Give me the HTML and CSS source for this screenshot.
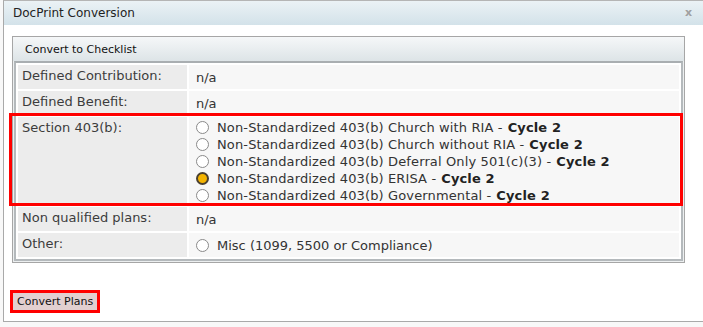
FILE: index.html
```html
<!DOCTYPE html>
<html lang="en">
<head>
    <meta charset="UTF-8">
    <title>DocPrint Conversion</title>
    <link rel="stylesheet" href="styles.css">
</head>
<body>
    <div class="dialog">
        <div class="dialog-title">
            <span>DocPrint Conversion</span>
            <span class="close">x</span>
        </div>
        <div class="dialog-body">
            <div class="panel">
                <div class="panel-head">Convert to Checklist</div>
                <div class="plan-table">
                    <div class="row">
                        <div class="label">Defined Contribution:</div>
                        <div class="value">n/a</div>
                    </div>
                    <div class="row">
                        <div class="label">Defined Benefit:</div>
                        <div class="value">n/a</div>
                    </div>
                    <div class="row highlight">
                        <div class="label">Section 403(b):</div>
                        <div class="value options">
                            <label class="option"><input type="radio" name="plan">Non-Standardized 403(b) Church with RIA - <b>Cycle 2</b></label>
                            <label class="option"><input type="radio" name="plan">Non-Standardized 403(b) Church without RIA - <b>Cycle 2</b></label>
                            <label class="option"><input type="radio" name="plan">Non-Standardized 403(b) Deferral Only 501(c)(3) - <b>Cycle 2</b></label>
                            <label class="option"><input type="radio" name="plan" checked>Non-Standardized 403(b) ERISA - <b>Cycle 2</b></label>
                            <label class="option"><input type="radio" name="plan">Non-Standardized 403(b) Governmental - <b>Cycle 2</b></label>
                        </div>
                    </div>
                    <div class="row">
                        <div class="label">Non qualified plans:</div>
                        <div class="value">n/a</div>
                    </div>
                    <div class="row">
                        <div class="label">Other:</div>
                        <div class="value">
                            <label class="option"><input type="radio" name="plan">Misc (1099, 5500 or Compliance)</label>
                        </div>
                    </div>
                </div>
            </div>
            <button class="convert-btn">Convert Plans</button>
        </div>
    </div>
</body>
</html>
```

FILE: styles.css
```css
* {
    box-sizing: border-box;
}

html, body {
    height: 100%;
}

body {
    margin: 0;
    overflow: hidden;
    background: #f8f8f8;
    font-family: "DejaVu Sans", Verdana, sans-serif;
    color: #333;
}

.dialog {
    width: 702px;
    margin-left: 3px;
    background: #fff;
    border: 1px solid #a9a9a9;
    border-top-color: #b5b5b5;
}

.dialog-title {
    height: 24px;
    display: flex;
    justify-content: space-between;
    align-items: center;
    padding: 0 12px 0 9px;
    background: linear-gradient(#ebf2f5, #d3e2e9);
    font-size: 12px;
    color: #222;
}

.close {
    font-size: 11px;
    font-weight: bold;
    color: #a0a0a0;
    padding-bottom: 2px;
}

.dialog-body {
    padding: 11px 8px 11px 8px;
}

.panel {
    width: 673px;
    border: 1px solid #a6a6a6;
    background: #eceff0;
}

.panel-head {
    height: 24px;
    display: flex;
    align-items: center;
    padding-left: 12px;
    background: linear-gradient(#f5f7f8, #dde4e7);
    font-size: 11px;
    color: #111;
}

.plan-table {
    margin: 0 1px 1px 1px;
    border: 2px solid #b4b9bc;
    border-top-color: #a9aeb1;
    background: #fff;
    padding: 2px;
    display: flex;
    flex-direction: column;
    gap: 2px;
}

.row {
    display: grid;
    grid-template-columns: 169px 1fr;
    gap: 2px;
    min-height: 24px;
    font-size: 13px;
}

.label {
    background: #ececec;
    padding: 2px 4px;
    line-height: 17px;
    color: #3c3c3c;
}

.value {
    background: #f7f7f7;
    padding: 0 7px;
    display: flex;
    align-items: center;
    line-height: 17px;
}

.options {
    flex-direction: column;
    align-items: flex-start;
    padding-top: 2px;
    padding-bottom: 1px;
    letter-spacing: 0.13px;
}

.option {
    display: flex;
    align-items: center;
    height: 17px;
    color: #333;
}

.option b {
    color: #222;
    margin-left: 5px;
}

.option input {
    appearance: none;
    width: 13px;
    height: 13px;
    margin: 0 8px 0 0;
    border: 1px solid #8a8a8a;
    border-radius: 50%;
    background: #fff;
}

.option input:checked {
    border: 2px solid #4a4030;
    background: #f4b400;
}

.highlight {
    position: relative;
}

    .highlight::after {
        content: "";
        position: absolute;
        top: -4px;
        left: -9px;
        right: -4px;
        bottom: -1px;
        border: 3px solid #f00;
    }

.convert-btn {
    margin: 30px 0 0 1px;
    padding: 0 4px;
    height: 17px;
    border: none;
    outline: 3px solid #f00;
    background: #e2d0d0;
    font-family: inherit;
    font-size: 11px;
    color: #111;
    display: block;
}
```
